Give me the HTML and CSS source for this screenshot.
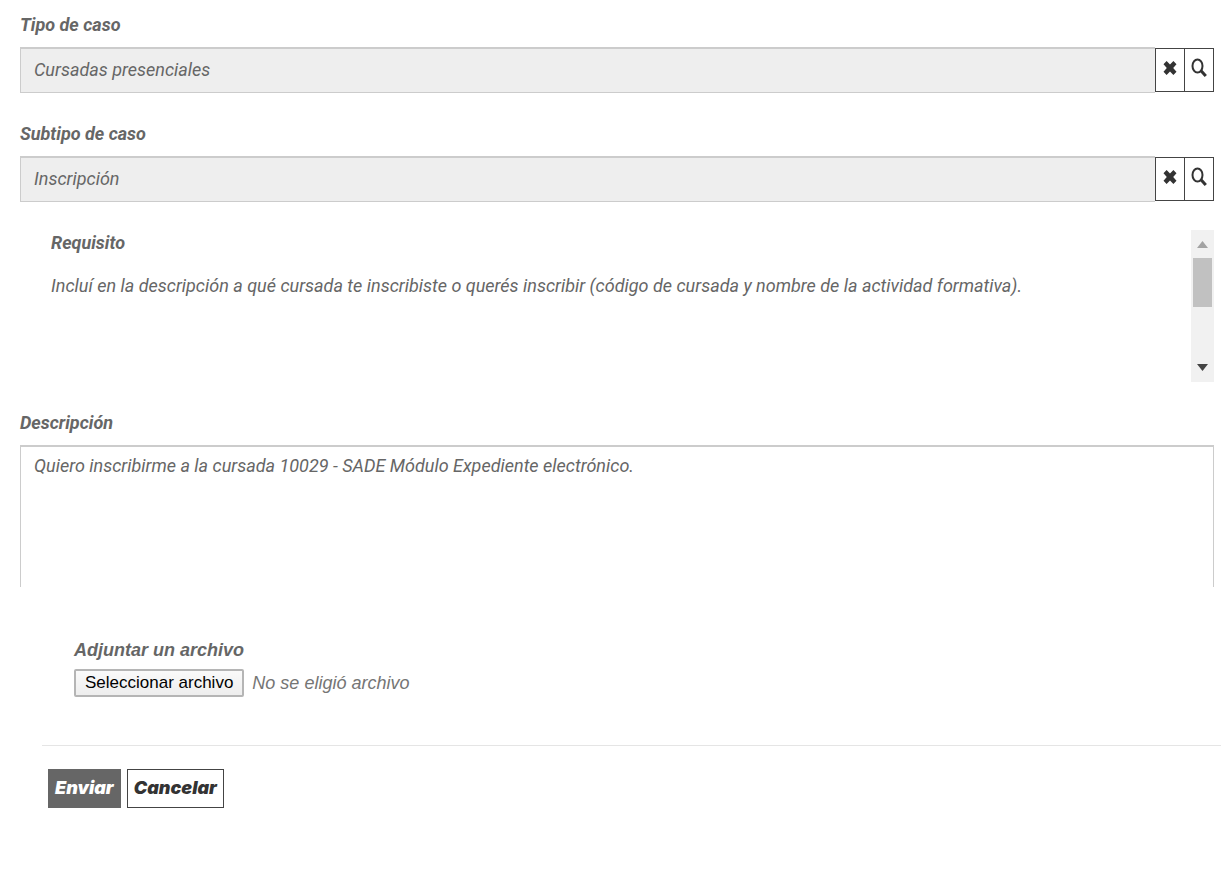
FILE: index.html
```
<!DOCTYPE html>
<html lang="es">

<head>
    <meta charset="UTF-8">
    <title>Nuevo caso</title>
    <link rel="stylesheet" href="styles.css">
</head>

<body>
    <form class="case-form">
        <div class="form-group">
            <label for="tipo">Tipo de caso</label>
            <div class="lookup">
                <input type="text" id="tipo" value="Cursadas presenciales" readonly>
                <div class="lookup-buttons">
                    <button type="button" aria-label="Borrar tipo">
                        <svg width="14" height="16" viewBox="0 0 14 16"><path d="M3.600 1 7 4.600 10.400 1 13.500 4.200 10.200 8l3.300 3.800L10.400 15 7 11.400 3.600 15 0.500 11.800 3.800 8 0.500 4.200z" /></svg>
                    </button>
                    <button type="button" aria-label="Buscar tipo">
                        <svg width="16" height="20" viewBox="0 0 16 20"><ellipse cx="6.500" cy="8" rx="5" ry="6.500" /><path class="handle" d="M9.800 12.500 14.800 18" /></svg>
                    </button>
                </div>
            </div>
        </div>

        <div class="form-group">
            <label for="subtipo">Subtipo de caso</label>
            <div class="lookup">
                <input type="text" id="subtipo" value="Inscripción" readonly>
                <div class="lookup-buttons">
                    <button type="button" aria-label="Borrar subtipo">
                        <svg width="14" height="16" viewBox="0 0 14 16"><path d="M3.600 1 7 4.600 10.400 1 13.500 4.200 10.200 8l3.300 3.800L10.400 15 7 11.400 3.600 15 0.500 11.800 3.800 8 0.500 4.200z" /></svg>
                    </button>
                    <button type="button" aria-label="Buscar subtipo">
                        <svg width="16" height="20" viewBox="0 0 16 20"><ellipse cx="6.500" cy="8" rx="5" ry="6.500" /><path class="handle" d="M9.800 12.500 14.800 18" /></svg>
                    </button>
                </div>
            </div>
        </div>

        <div class="requirement">
            <div class="requirement-content">
                <h2>Requisito</h2>
                <p>Incluí en la descripción a qué cursada te inscribiste o querés inscribir (código de cursada y nombre de la actividad formativa).</p>
            </div>
            <div class="scrollbar" aria-hidden="true">
                <svg class="arrow-up" width="11" height="7" viewBox="0 0 11 7"><path d="M0 7 5.500 0 11 7z" /></svg>
                <div class="scrollbar-track">
                    <div class="scrollbar-thumb"></div>
                </div>
                <svg class="arrow-down" width="11" height="7" viewBox="0 0 11 7"><path d="M0 0h11L5.500 7z" /></svg>
            </div>
        </div>

        <div class="form-group">
            <label for="descripcion">Descripción</label>
            <textarea id="descripcion">Quiero inscribirme a la cursada 10029 - SADE Módulo Expediente electrónico.</textarea>
        </div>

        <div class="attachment">
            <label for="archivo">Adjuntar un archivo</label>
            <div class="file-row">
                <input type="file" id="archivo" hidden>
                <button type="button" id="selectFile" class="btn-file">Seleccionar archivo</button>
                <span id="fileName">No se eligió archivo</span>
            </div>
        </div>

        <div class="actions">
            <button type="submit" class="btn btn-primary">Enviar</button>
            <button type="button" class="btn">Cancelar</button>
        </div>
    </form>

    <script>
        const fileInput = document.getElementById('archivo');

        document.getElementById('selectFile').addEventListener('click', () => fileInput.click());

        // Mostrar el nombre del archivo elegido
        fileInput.addEventListener('change', () => {
            const file = fileInput.files[0];
            document.getElementById('fileName').textContent = file ? file.name : 'No se eligió archivo';
        });
    </script>
</body>

</html>
```

FILE: styles.css
```
* {
    box-sizing: border-box;
}

body {
    margin: 0;
    background-color: #fff;
    color: #666;
    font-family: Roboto, "Liberation Sans", Arial, sans-serif;
    font-size: 18px;
    font-style: italic;
    line-height: 22px;
}

input,
textarea,
button {
    font: inherit;
    color: inherit;
}

.case-form {
    padding: 14px 7px 40px 20px;
}

.form-group {
    margin-bottom: 30px;
}

label,
h2 {
    display: block;
    margin: 0 0 11px;
    font-size: 18px;
    font-weight: bold;
    line-height: 22px;
}

.lookup {
    display: flex;
    align-items: center;
}

.lookup input {
    flex: 1;
    min-width: 0;
    height: 46px;
    padding: 0 13px 2px;
    border: 1px solid #ccc;
    border-top: 2px solid #ccc;
    border-right: 0;
    border-radius: 0;
    background-color: #eee;
}

.lookup-buttons {
    display: flex;
}

.lookup-buttons button {
    display: flex;
    align-items: center;
    justify-content: center;
    width: 30px;
    height: 44px;
    padding: 0 0 4px;
    border: 1px solid #444;
    background-color: #fff;
}

.lookup-buttons button + button {
    margin-left: -1px;
}

.lookup-buttons svg {
    fill: #333;
}

.lookup-buttons ellipse {
    fill: none;
    stroke: #333;
    stroke-width: 2;
}

.lookup-buttons .handle {
    stroke: #333;
    stroke-width: 3;
}

.requirement {
    display: flex;
    height: 152px;
    margin: -2px 0 30px;
    padding-left: 31px;
}

.requirement-content {
    flex: 1;
    padding-top: 2px;
    overflow: hidden;
}

.requirement h2 {
    margin-bottom: 21px;
}

.requirement p {
    margin: 0;
}

.scrollbar {
    display: flex;
    flex-direction: column;
    align-items: center;
    width: 23px;
    padding: 11px 2px;
    background-color: #f1f1f1;
}

.scrollbar-track {
    flex: 1;
    align-self: stretch;
    padding: 10px 0;
}

.scrollbar-thumb {
    height: 49px;
    background-color: #c1c1c1;
}

.arrow-up {
    fill: #a3a3a3;
}

.arrow-down {
    fill: #444;
}

textarea {
    display: block;
    width: 100%;
    height: 142px;
    padding: 8px 13px;
    border: 1px solid #ccc;
    border-top: 2px solid #ccc;
    border-bottom: 0;
    resize: none;
}

.attachment {
    margin-top: 52px;
    padding-left: 54px;
    font-family: "Liberation Sans", Arial, sans-serif;
}

.attachment label {
    margin-bottom: 8px;
}

.file-row {
    display: flex;
    align-items: center;
    gap: 8px;
    color: #757575;
}

.btn-file {
    height: 28px;
    padding: 0 9px;
    border: 2px solid #b5b5b5;
    border-radius: 2px;
    background: linear-gradient(#fafafa, #eee);
    color: #000;
    font-size: 17px;
    font-style: normal;
}

.actions {
    display: flex;
    gap: 6px;
    margin: 48px -7px 0 22px;
    padding: 23px 6px 0;
    border-top: 1px solid #e5e5e5;
}

.btn {
    height: 39px;
    padding: 0 6px 2px;
    border: 1px solid #444;
    background-color: #fff;
    color: #333;
    font-family: Inter, "Liberation Sans", Arial, sans-serif;
    font-weight: 900;
}

.btn-primary {
    border-color: #666;
    background-color: #666;
    color: #fff;
}
```
